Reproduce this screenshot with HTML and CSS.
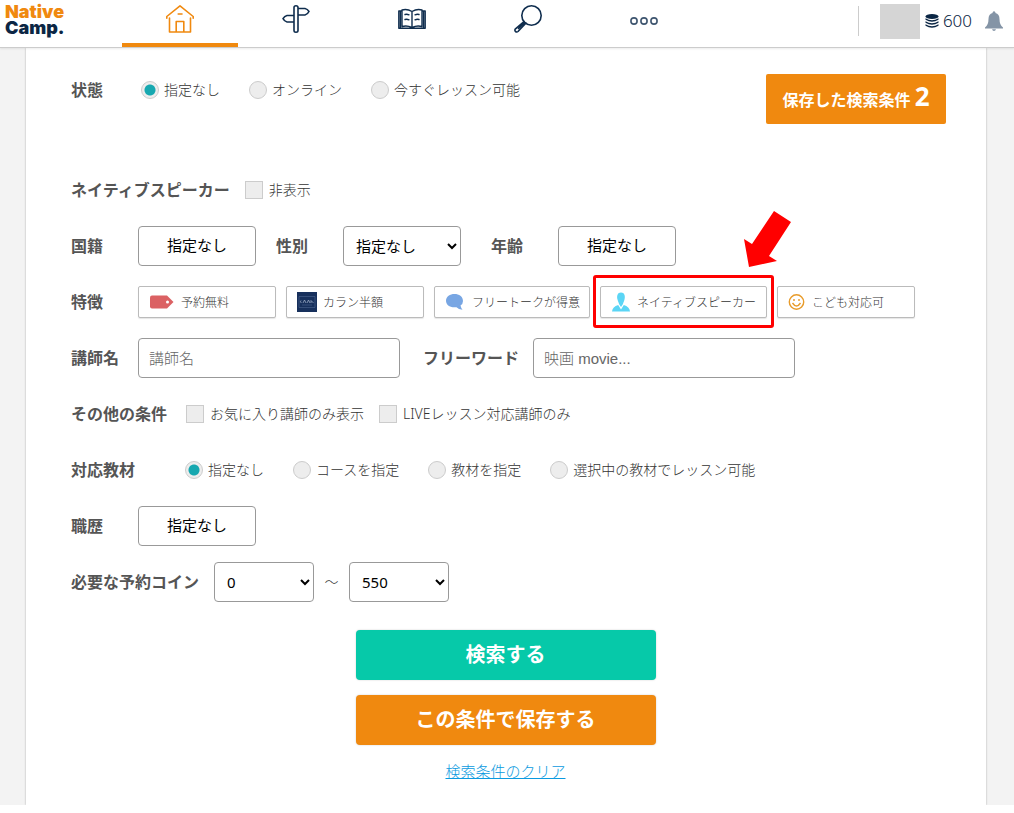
FILE: index.html
```html
<!DOCTYPE html>
<html lang="ja">
<head>
<meta charset="utf-8">
<meta name="viewport" content="width=device-width, initial-scale=1">
<title>Native Camp. 講師検索</title>
<link rel="stylesheet" href="styles.css">
</head>
<body>
<header class="header">
  <a class="logo" href="#"><span class="logo-top">Native</span><span>Camp.</span></a>
  <nav class="nav" aria-label="メイン">
    <a class="tab tab-active" href="#" aria-label="ホーム">
      <svg class="tab-icon" viewBox="0 0 28 28"><path d="M3.500 13V27H24.500V13M0.800 13.200V11.500L14 0.900L27.200 11.500V13.200M10.200 27V16.500H17.800V27M12.200 9H16"/></svg>
    </a>
    <a class="tab" href="#" aria-label="コース">
      <svg class="tab-icon" viewBox="0 0 28 28"><path d="M12 2.500Q12 .8 14 .8Q16 .8 16 2.500V25.500Q16 27.200 14 27.200Q12 27.200 12 25.500ZM16 3.500H23Q25.500 4 27 6.500Q25.500 9.500 23 10H16M12 10.500H5Q2.500 11 1 13.700Q2.500 16.500 5 17H12"/></svg>
    </a>
    <a class="tab" href="#" aria-label="教材">
      <svg class="tab-icon tab-icon-book" viewBox="0 0 28 28"><path d="M14 6.500Q9 3.500 4 5V21.500Q9 20 14 22.500Q19 20 24 21.500V5Q19 3.500 14 6.500V22.500M4 6H.8V23.300H27.200V6H24M2.400 7V23M25.600 7V23M7 9.500Q9 9 11 9.800M7 14.500Q9 14 11 14.800M17 9.800Q19 9 21 9.500M17 14.800Q19 14 21 14.500"/></svg>
    </a>
    <a class="tab" href="#" aria-label="検索">
      <svg class="tab-icon" viewBox="0 0 28 28"><circle cx="17.500" cy="10.500" r="9.700"/><path d="M10 16.500L1.200 24.200Q.5 25.500 1.500 26.500Q2.800 27.500 4 26.500L11.800 18.200M4.500 23.500L10 18"/></svg>
    </a>
    <a class="tab" href="#" aria-label="その他">
      <svg class="tab-icon tab-icon-dots" viewBox="0 0 28 28"><circle cx="4" cy="16" r="3.100"/><circle cx="14" cy="16" r="3.100"/><circle cx="24" cy="16" r="3.100"/></svg>
    </a>
  </nav>
  <div class="account">
    <span class="avatar"></span>
    <svg class="coin-icon" viewBox="0 0 14 14"><ellipse cx="7" cy="2.500" rx="6.500" ry="2.500"/><path d="M.5 4.300Q7 8 13.500 4.300V5.800Q7 9.500 .5 5.800ZM.5 7.300Q7 11 13.500 7.300V8.800Q7 12.500 .5 8.800ZM.5 10.300Q7 14 13.500 10.300V11.800Q7 15.500 .5 11.800Z"/></svg>
    <span class="coins">600</span>
    <button class="bell" type="button" aria-label="お知らせ">
      <svg class="bell-icon" viewBox="0 0 18 20"><path d="M7.600 2V1.200Q9-.8 10.400 1.200V2Q14.500 3 14.500 8Q14.500 14 18 16.500V17.500H0V16.500Q3.500 14 3.500 8Q3.500 3 7.600 2ZM7 18.200H11Q10.500 20 9 20Q7.500 20 7 18.200Z"/></svg>
    </button>
  </div>
</header>

<div class="backdrop">
<main class="panel">
<form class="form">
  <div class="row row-status">
    <div class="row-main" role="radiogroup" aria-labelledby="status-label">
      <span class="label label-status" id="status-label">状態</span>
      <div class="radios">
        <label class="choice"><input class="radio" type="radio" name="status" checked>指定なし</label>
        <label class="choice"><input class="radio" type="radio" name="status">オンライン</label>
        <label class="choice"><input class="radio" type="radio" name="status">今すぐレッスン可能</label>
      </div>
    </div>
    <button class="saved" type="button">保存した検索条件 <span class="saved-count">2</span></button>
  </div>

  <div class="row">
    <span class="label label-checks">ネイティブスピーカー</span>
    <label class="choice choice-check"><input class="check" type="checkbox">非表示</label>
  </div>

  <div class="row">
    <label class="label" for="country">国籍</label>
    <button class="picker" id="country" type="button">指定なし</button>
    <label class="label label-gender" for="gender">性別</label>
    <select class="select" id="gender"><option>指定なし</option></select>
    <label class="label label-age" for="age">年齢</label>
    <button class="picker" id="age" type="button">指定なし</button>
  </div>

  <div class="row">
    <span class="label">特徴</span>
    <div class="chips">
      <button class="chip" type="button">
        <svg class="icon-tag" viewBox="0 0 26 14"><path fill="#db6163" d="M3 .5H18L24.500 7L18 13.500H3Q1 13.500 1 11.500V2.500Q1 .5 3 .5Z"/><circle cx="18.500" cy="7" r="1.500" fill="#fff"/></svg>予約無料</button>
      <button class="chip" type="button">
        <svg class="icon-callan" viewBox="0 0 20 20"><path fill="#17305c" d="M0 0H20V20H0Z"/><path fill="none" stroke="#566f98" stroke-width=".5" d="M2 4.500H18V15.500H2ZM5 13H15"/><path fill="none" stroke="#a9b8ce" stroke-width=".7" d="M4 8.500Q2.500 10 4.500 11M6 11L7.500 8L9 11M10 11L11.500 8L13 11M14 11V8.500L16.500 11"/></svg>カラン半額</button>
      <button class="chip chip-talk" type="button">
        <svg class="icon-talk" viewBox="0 0 21 18"><path fill="#78a6e3" d="M9.500 1C14 1 18 3.500 18 8Q18 11 15.500 12.500Q16 15 17.500 16.800Q13.500 16.300 11.500 14.200C5 15 1 12 1 7.800C1 3.500 5 1 9.500 1Z"/></svg>フリートークが得意</button>
      <div class="callout">
        <button class="chip chip-native" type="button">
          <svg class="icon-person" viewBox="0 0 20 20"><path fill="#5bd5f5" d="M10 .5C13.500 .5 14.500 4 13.500 7.500C13 10 12 11 12 12L10 15L8 12C8 11 7 10 6.500 7.500C5.500 4 6.500 .5 10 .5ZM7.200 13L10 17.500L12.800 13Q18.500 14.500 19 19.500H1Q1.500 14.500 7.200 13Z"/></svg>ネイティブスピーカー</button>
        <span class="callout-frame"></span>
        <svg class="callout-arrow" viewBox="0 0 49 58" aria-hidden="true"><path fill="#f00" d="M31 1L48 12L26 46L34 51L6 57L1 29L9 34Z"/></svg>
      </div>
      <button class="chip" type="button">
        <svg class="icon-smile" viewBox="0 0 18 18"><circle cx="8.500" cy="9" r="7.200"/><path d="M4.500 10Q8.500 16 12.500 10M6 6V8M11 6V8"/></svg>こども対応可</button>
    </div>
  </div>

  <div class="row">
    <label class="label" for="teacher">講師名</label>
    <input class="text" id="teacher" type="text" placeholder="講師名">
    <label class="label label-word" for="word">フリーワード</label>
    <input class="text" id="word" type="text" placeholder="映画 movie...">
  </div>

  <div class="row">
    <span class="label label-other">その他の条件</span>
    <div class="checks">
      <label class="choice choice-check"><input class="check" type="checkbox">お気に入り講師のみ表示</label>
      <label class="choice choice-check"><input class="check" type="checkbox">LIVEレッスン対応講師のみ</label>
    </div>
  </div>

  <div class="row" role="radiogroup" aria-labelledby="text-label">
    <span class="label label-material" id="text-label">対応教材</span>
    <div class="radios">
      <label class="choice"><input class="radio" type="radio" name="text" checked>指定なし</label>
      <label class="choice"><input class="radio" type="radio" name="text">コースを指定</label>
      <label class="choice"><input class="radio" type="radio" name="text">教材を指定</label>
      <label class="choice"><input class="radio" type="radio" name="text">選択中の教材でレッスン可能</label>
    </div>
  </div>

  <div class="row">
    <label class="label" for="career">職歴</label>
    <button class="picker" id="career" type="button">指定なし</button>
  </div>

  <div class="row">
    <label class="label label-checks" for="coin-min">必要な予約コイン</label>
    <select class="select select-coin" id="coin-min"><option>0</option></select>
    <span class="tilde">～</span>
    <select class="select select-coin" aria-label="予約コインの上限"><option>550</option></select>
  </div>

  <div class="actions">
    <button class="action action-search" type="submit">検索する</button>
    <button class="action action-save" type="button">この条件で保存する</button>
    <a class="clear" href="#">検索条件のクリア</a>
  </div>
</form>
</main>
</div>
</body>
</html>
```

FILE: styles.css
```css
* {
  box-sizing: border-box;
}

body {
  margin: 0;
  background: #fff;
  color: #333;
  font-family: "Noto Sans", "Noto Sans CJK JP", sans-serif;
  font-size: 14px;
  font-weight: 300;
  line-height: 20px;
}

button,
input,
select {
  margin: 0;
  font-family: inherit;
  font-weight: inherit;
}

button {
  cursor: pointer;
}

/* Header */
.header {
  position: relative;
  display: flex;
  height: 48px;
  background: #fff;
  border-bottom: 1px solid #ccc;
  box-shadow: 0 1px 2px rgba(0, 0, 0, 0.08);
}

.logo {
  display: flex;
  flex-direction: column;
  width: 122px;
  padding: 4px 0 0 5px;
  color: #0b2644;
  font-family: Inter, sans-serif;
  font-size: 18px;
  font-weight: 900;
  line-height: 16px;
  text-decoration: none;
}

.logo-top {
  color: #f0890f;
}

.nav {
  display: flex;
}

.tab {
  display: flex;
  justify-content: center;
  width: 116px;
  padding-top: 5px;
  border-bottom: 4px solid transparent;
  color: #0f2d4e;
}

.tab-active {
  border-bottom-color: #f0890f;
  color: #f0890f;
}

.tab-icon {
  width: 28px;
  height: 28px;
  fill: none;
  stroke: currentColor;
  stroke-width: 1.6;
  stroke-linejoin: round;
  stroke-linecap: round;
}

.tab-icon-book {
  stroke-width: 1.4;
}

.tab-icon-dots {
  stroke: #3f5670;
}

.account {
  display: flex;
  align-items: center;
  height: 30px;
  margin: 6px 11px 0 auto;
  padding-left: 21px;
  border-left: 1px solid #ccc;
  color: #0b2644;
  font-size: 17px;
}

.avatar {
  width: 40px;
  height: 35px;
  background: #d5d5d5;
}

.coin-icon {
  width: 14px;
  height: 14px;
  margin: 0 4px 0 5px;
  fill: #0b2644;
}

.bell {
  margin-left: 13px;
  padding: 0;
  border: 0;
  background: none;
}

.bell-icon {
  display: block;
  width: 18px;
  height: 20px;
  fill: #8494a6;
}

/* Page surface */
.backdrop {
  padding: 0 28px 0 26px;
  background: #f3f3f3;
}

.panel {
  padding: 22px 40px 24px 45px;
  background: #fff;
  box-shadow: 0 0 2px rgba(0, 0, 0, 0.3);
}

.form {
  display: flex;
  flex-direction: column;
  gap: 16px;
}

.row {
  display: flex;
  align-items: center;
  min-height: 40px;
}

.row-status {
  align-items: flex-start;
  justify-content: space-between;
  min-height: 84px;
}

.row-main {
  display: flex;
  align-items: center;
  height: 40px;
}

.label {
  flex: none;
  min-width: 67px;
  color: #555;
  font-size: 16px;
  font-weight: 700;
}

.label-status {
  min-width: 70px;
}

.label-gender {
  margin-left: 20px;
}

.label-age {
  margin-left: 30px;
}

.label-word {
  margin: 0 14px 0 23px;
}

.label-checks {
  margin-right: 15px;
}

.label-other {
  margin-right: 19px;
}

.label-material {
  margin-right: 47px;
}

/* Choices */
.radios {
  display: flex;
  gap: 29px;
}

.checks {
  display: flex;
  gap: 15px;
}

.choice {
  display: flex;
  align-items: center;
  gap: 5px;
}

.choice-check {
  gap: 6px;
}

.radio,
.check {
  flex: none;
  appearance: none;
  width: 18px;
  height: 18px;
  border: 1px solid #ccc;
  background: #ededed;
}

.radio {
  border-radius: 50%;
}

.radio:checked {
  background: radial-gradient(circle, #17a8b0 5px, #ededed 6px);
}

/* Fields */
.picker,
.select,
.text {
  height: 40px;
  border: 1px solid #999;
  border-radius: 4px;
  background: #fff;
  color: #000;
  font-size: 15px;
  font-weight: 400;
}

.picker,
.select {
  width: 118px;
}

.picker {
  padding: 0 0 4px;
}

.select {
  padding: 0 0 0 8px;
}

.select-coin {
  width: 100px;
}

.text {
  width: 262px;
  padding: 0 10px;
  font-family: "Liberation Sans", "Noto Sans CJK JP", sans-serif;
  font-weight: 300;
}

.text::placeholder {
  color: #666;
}

.tilde {
  width: 35px;
  text-align: center;
}

/* Feature chips */
.chips {
  display: flex;
  gap: 10px;
}

.chip {
  display: flex;
  align-items: center;
  gap: 6px;
  width: 138px;
  height: 32px;
  padding: 0 10px;
  border: 1px solid #bbb;
  border-radius: 2px;
  background: #fff;
  box-shadow: 0 1px 1px rgba(0, 0, 0, 0.1);
  color: #333;
  font-size: 12px;
  white-space: nowrap;
}

.chip svg {
  flex: none;
}

.chip-talk {
  width: 156px;
}

.chip-native {
  width: 167px;
}

.icon-tag {
  width: 26px;
  height: 14px;
}

.icon-callan,
.icon-person {
  width: 20px;
  height: 20px;
}

.icon-talk {
  width: 21px;
  height: 18px;
}

.icon-smile {
  width: 18px;
  height: 18px;
  fill: none;
  stroke: #e89b2a;
  stroke-width: 1.4;
}

.callout {
  position: relative;
}

.callout-frame {
  position: absolute;
  inset: -11px -7px -10px;
  border: 3px solid #f00;
  border-radius: 3px;
  pointer-events: none;
}

.callout-arrow {
  position: absolute;
  top: -76px;
  left: 143px;
  width: 49px;
  height: 58px;
  pointer-events: none;
}

/* Buttons */
.saved {
  margin-top: 4px;
  width: 180px;
  height: 50px;
  padding: 0 0 6px;
  border: 0;
  border-radius: 2px;
  background: #f0890f;
  color: #fff;
  font-size: 16px;
  font-weight: 700;
}

.saved-count {
  font-size: 26px;
}

.actions {
  display: flex;
  flex-direction: column;
  align-items: center;
  gap: 15px;
  padding: 12px 6px 0 0;
}

.action {
  width: 300px;
  height: 50px;
  padding: 0 0 4px;
  border: 0;
  border-radius: 4px;
  box-shadow: 0 0 2px rgba(0, 0, 0, 0.2);
  color: #fff;
  font-size: 20px;
  font-weight: 700;
}

.action-search {
  background: #06c9a9;
}

.action-save {
  background: #f0890f;
}

.clear {
  padding-top: 1px;
  color: #0a9ae0;
  font-size: 15px;
}
```
